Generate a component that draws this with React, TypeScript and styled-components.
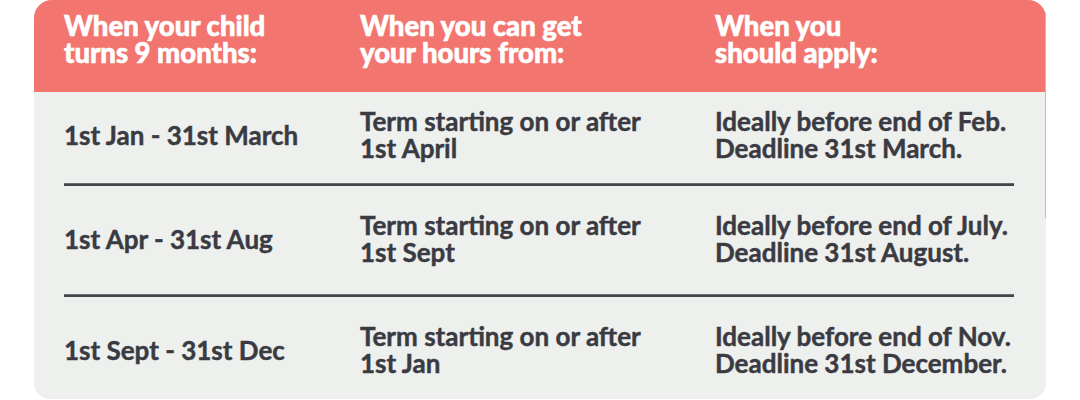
import { FC } from 'react';
import styled, { createGlobalStyle } from 'styled-components';

type Row = {
  born: string;
  from: string[];
  apply: string[];
  pad: string;
};

const rows: Row[] = [
  {
    born: '1st Jan - 31st March',
    from: ['Term starting on or after', '1st April'],
    apply: ['Ideally before end of Feb.', 'Deadline 31st March.'],
    pad: '16px 0 21px',
  },
  {
    born: '1st Apr - 31st Aug',
    from: ['Term starting on or after', '1st Sept'],
    apply: ['Ideally before end of July.', 'Deadline 31st August.'],
    pad: '26px 0 28px',
  },
  {
    born: '1st Sept - 31st Dec',
    from: ['Term starting on or after', '1st Jan'],
    apply: ['Ideally before end of Nov.', 'Deadline 31st December.'],
    pad: '26px 0 22px',
  },
];

const headings = [
  ['When your child', 'turns 9 months:'],
  ['When you can get', 'your hours from:'],
  ['When you', 'should apply:'],
];

const App: FC = () => {
  return (
    <>
      <GlobalStyle />
      <Card>
        <Header>
          {headings.map((h) => (
            <Cell key={h[0]}>
              {h.map((line) => (
                <HeadLine key={line}>{line}</HeadLine>
              ))}
            </Cell>
          ))}
        </Header>
        <div>
          {rows.map((row, i) => (
            <div key={row.born}>
              {i > 0 && <Divider />}
              <BodyRow pad={row.pad}>
                <Cell>
                  <Line>{row.born}</Line>
                </Cell>
                <Cell>
                  {row.from.map((line) => (
                    <Line key={line}>{line}</Line>
                  ))}
                </Cell>
                <Cell>
                  {row.apply.map((line) => (
                    <Line key={line}>{line}</Line>
                  ))}
                </Cell>
              </BodyRow>
            </div>
          ))}
        </div>
      </Card>
    </>
  );
};

const GlobalStyle = createGlobalStyle`
  body {
    margin: 0;
    background: #ffffff;
    font-family: Lato, 'Open Sans', sans-serif;
  }
`;

const Card = styled.div`
  position: relative;
  margin-left: 34px;
  width: 1012px;
  border-radius: 18px 18px 16px 16px;
  overflow: hidden;
  background: #eef0ee;

  &::after {
    content: '';
    position: absolute;
    top: 0;
    right: 0;
    width: 1px;
    height: 218px;
    background: #f5a6a1;
  }
`;

const Grid = styled.div`
  display: grid;
  grid-template-columns: 296px 355px 1fr;
  padding: 0 32px 0 30px;
  font-weight: 700;
`;

const Header = styled(Grid)`
  height: 92px;
  box-sizing: border-box;
  padding-top: 12px;
  background: #f2756f;
  color: #ffffff;
`;

const BodyRow = styled(Grid)<{ pad: string }>`
  padding-top: ${(p) => p.pad.split(' ')[0]};
  padding-bottom: ${(p) => p.pad.split(' ')[2]};
  align-items: center;
  color: #3a3b42;
`;

const Cell = styled.div`
  white-space: nowrap;
`;

const Line = styled.div`
  height: 27px;
  font-size: 26px;
  line-height: 27px;
  -webkit-text-stroke: 0.45px #3a3b42;
`;

const HeadLine = styled.div`
  height: 27px;
  font-size: 27.5px;
  line-height: 27px;
  font-weight: 900;
  -webkit-text-stroke: 0.6px #ffffff;
`;

const Divider = styled.div`
  margin: 0 32px 0 30px;
  height: 3px;
  background: #44464d;
  border-top: 1px solid #6a6c72;
  box-sizing: border-box;
`;

export default App;
